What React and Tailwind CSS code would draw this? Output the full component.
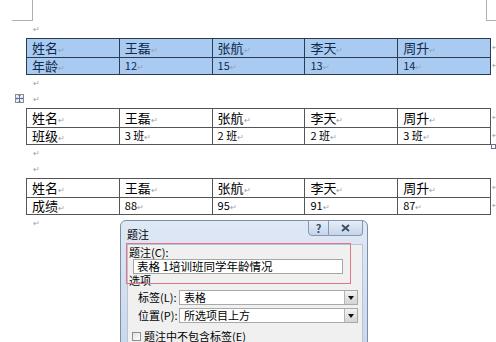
const cjk = { fontFamily: '"Noto Sans CJK SC", "Noto Sans", sans-serif' };

const names = ['姓名', '王磊', '张航', '李天', '周升'];

function Mark({ className = '' }) {
  return <span className={`text-[8px] text-gray-400 leading-none ${className}`}>↵</span>;
}

function Para({ children }) {
  return (
    <div className="h-[16.5px] flex items-center pl-[7px] relative">
      <Mark />
      {children}
    </div>
  );
}

function DocTable({ row2, selected, handle }) {
  const cell = selected
    ? 'border border-[#2e3b4e] bg-[#a9cbf2] text-[#10284a]'
    : 'border border-[#555] text-black';
  return (
    <div className="relative w-[470px]">
      <table className="border-collapse w-[465px] table-fixed">
        <tbody>
          <tr className="h-[19px]">
            {names.map((n) => (
              <td key={n} className={`${cell} px-[5px] py-0 text-[13px] leading-none`}>
                {n}
                <Mark />
              </td>
            ))}
          </tr>
          <tr className="h-[17px]">
            {row2.map((v, i) => (
              <td key={i} className={`${cell} px-[5px] py-0 leading-none ${i === 0 ? 'text-[13px]' : 'text-[11px]'}`}>
                {v}
                <Mark />
              </td>
            ))}
          </tr>
        </tbody>
      </table>
      <div className="absolute left-[466px] top-0 flex flex-col">
        <div className="h-[19px] flex items-center"><Mark /></div>
        <div className="h-[17px] flex items-center"><Mark /></div>
      </div>
      {handle && (
        <div className="absolute left-[465px] top-[36px] w-[5px] h-[5px] border border-gray-500 bg-white" />
      )}
    </div>
  );
}

function SelectBox({ value }) {
  return (
    <div className="w-[179px] h-[15px] bg-white border border-[#a9a9a9] flex items-center justify-between">
      <span className="pl-[4px] text-[11px] leading-none">{value}</span>
      <div className="w-[13px] h-[13px] bg-gradient-to-b from-[#f2f2f2] to-[#d4d4d4] border-l border-[#b5b5b5] flex items-center justify-center">
        <svg width="6" height="4" viewBox="0 0 6 4"><path d="M0 0h6L3 4z" fill="#111" /></svg>
      </div>
    </div>
  );
}

export default function App() {
  return (
    <div className="w-[496px] h-[342px] bg-white relative overflow-hidden" style={cjk}>
      {/* page margin corners */}
      <div className="flex justify-between h-[21px]">
        <div className="ml-[12px] w-[21px] h-[21px] border-r border-b border-[#b0b0b0]" />
        <div className="w-[10px] h-[21px] border-l border-b border-[#b0b0b0]" />
      </div>

      <div className="ml-[26px]">
        <Para />
        <DocTable selected row2={['年龄', '12', '15', '13', '14']} />
        <Para />
        <Para>
          <div className="absolute left-[-11px] top-[3px] w-[9px] h-[9px] border border-[#8c8c8c] bg-[#eef2f8] flex items-center justify-center">
            <svg width="7" height="7" viewBox="0 0 7 7">
              <path d="M3.5 0v7M0 3.5h7M2.5 1l1-1 1 1M2.5 6l1 1 1-1M1 2.5l-1 1 1 1M6 2.5l1 1-1 1" stroke="#3a5a8a" strokeWidth="0.8" fill="none" />
            </svg>
          </div>
        </Para>
        <DocTable handle row2={['班级', '3 班', '2 班', '2 班', '3 班']} />
        <Para />
        <Para />
        <DocTable row2={['成绩', '88', '95', '91', '87']} />
        <Para />
      </div>

      {/* caption dialog */}
      <div className="absolute left-[120px] top-[220px] w-[248px] h-[130px] rounded-t-[6px] border border-[#7d8ea8] bg-gradient-to-b from-[#dfe8f5] to-[#c9d8ec] pl-[6px] pr-[4px]">
        <div className="h-[23px] flex items-start justify-between">
          <span className="text-[11px] leading-none mt-[8px] text-black">题注</span>
          <div className="flex -mt-px">
            <div className="w-[21px] h-[16px] border border-[#8597b3] rounded-bl-[4px] bg-gradient-to-b from-[#e6eef8] to-[#c5d4ea] flex items-center justify-center text-[11px] font-bold text-[#3b4c66] leading-none">?</div>
            <div className="w-[34px] h-[16px] border border-l-0 border-[#8597b3] rounded-br-[4px] bg-gradient-to-b from-[#e6eef8] to-[#c5d4ea] flex items-center justify-center">
              <svg width="9" height="8" viewBox="0 0 9 8"><path d="M1 1l7 6M8 1L1 7" stroke="#3b4c66" strokeWidth="1.8" /></svg>
            </div>
          </div>
        </div>
        <div className="h-[110px] bg-[#f0f0f0] border border-[#b9c4d4] relative text-black">
          <div className="h-[14px] pl-[1px] flex items-center text-[11px] leading-none">题注(C):</div>
          <div className="ml-[5px] w-[210px] h-[15px] bg-white border border-[#a5a5a5] flex items-center pl-[3px] text-[11.5px] leading-none overflow-hidden">
            表格 1培训班同学年龄情况
          </div>
          <div className="h-[12px] pl-[1px] pt-[1px] flex items-center text-[11px] leading-none">选项</div>
          <div className="mt-[4px] flex items-center">
            <span className="w-[51px] pl-[10px] text-[11px] leading-none">标签(L):</span>
            <SelectBox value="表格" />
          </div>
          <div className="mt-[3px] flex items-center">
            <span className="w-[51px] pl-[10px] text-[11px] leading-none">位置(P):</span>
            <SelectBox value="所选项目上方" />
          </div>
          <div className="mt-[8px] flex items-center pl-[4px] gap-[3px]">
            <div className="w-[9px] h-[9px] border border-[#8e8e8e] bg-gradient-to-br from-[#e2e2e2] to-white" />
            <span className="text-[11px] leading-none">题注中不包含标签(E)</span>
          </div>
          <div className="mt-[2px] ml-[2px] w-[230px] border-t border-[#a0a0a0]" />
          {/* highlight annotation */}
          <div className="absolute left-[-2px] top-[-2px] w-[225px] h-[41px] border border-[#e07585]" />
        </div>
      </div>
    </div>
  );
}
